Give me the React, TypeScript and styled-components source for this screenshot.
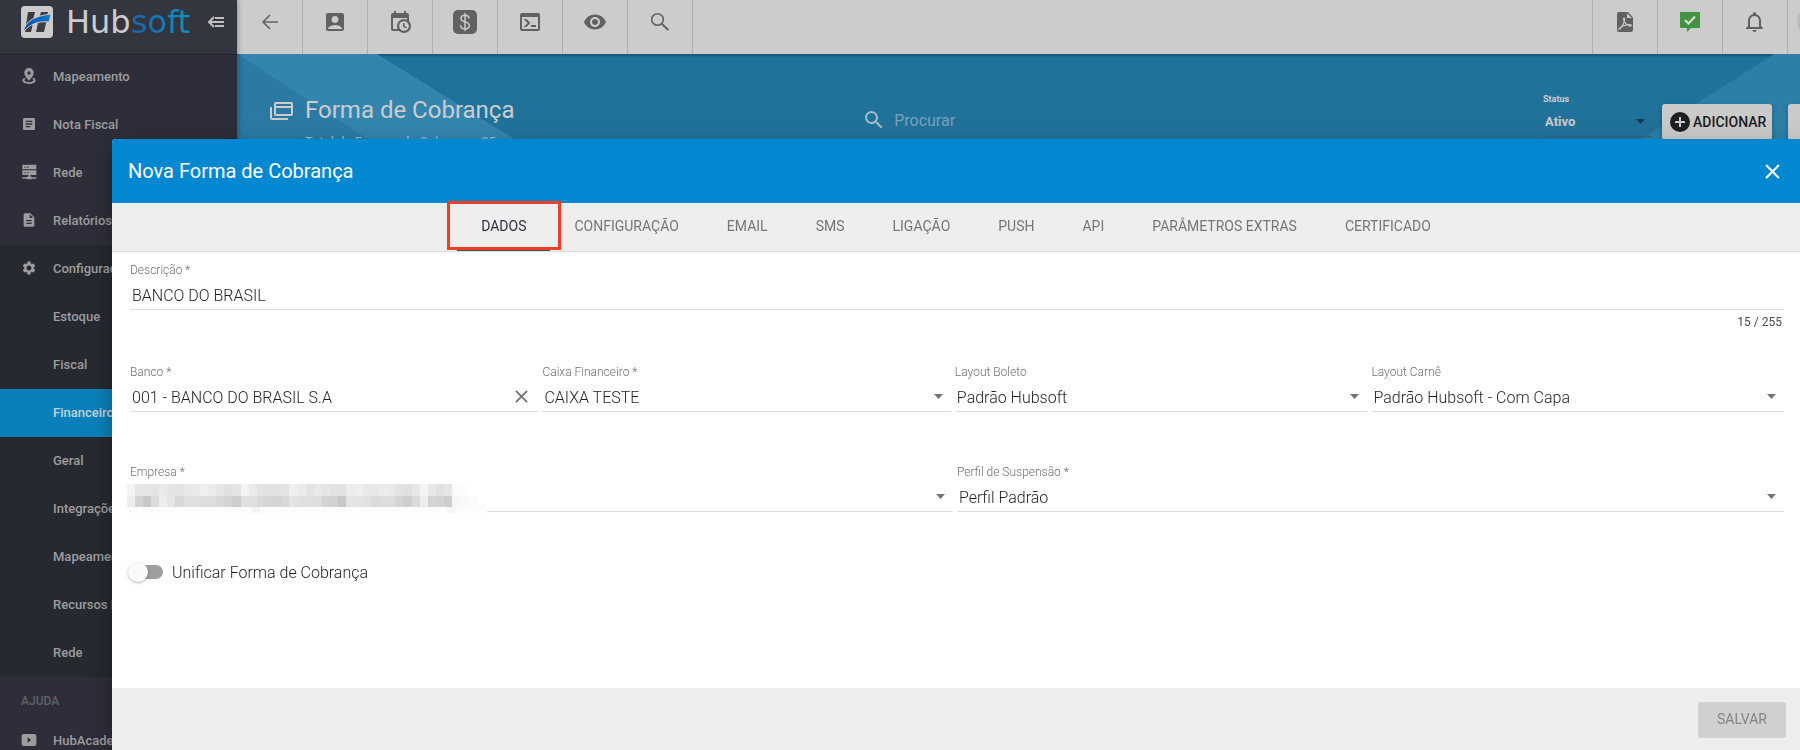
import React, { useState } from "react";
import styled, { createGlobalStyle, css } from "styled-components";
import { MdAccountBox, MdArticle, MdDescription, MdSearch, MdSettings, MdVisibility } from "react-icons/md";

const GlobalStyle = createGlobalStyle`
  *, *::before, *::after { box-sizing: border-box; }
  html, body { margin: 0; height: 100%; overflow: hidden; }
  body { font-family: Roboto, "Liberation Sans", sans-serif; font-size: 14px; background: #c8c8c8; }
  button, input, select { font-family: inherit; border: 0; background: none; padding: 0; margin: 0; outline: none; }
  a { color: inherit; text-decoration: none; }
  #root { height: 100%; }
`;

/* ---------- shell ---------- */

const Shell = styled.div`
  display: flex;
  height: 100vh;
  overflow: hidden;
`;

const Sidebar = styled.aside`
  position: relative;
  z-index: 1;
  flex: none;
  display: flex;
  flex-direction: column;
  width: 237px;
  background: #2d2e39;
  color: #9d9d9f;
  box-shadow: 0 0 6px rgba(0, 0, 0, 0.4);
`;

const Brand = styled.header`
  flex: none;
  display: flex;
  align-items: center;
  height: 55px;
  padding: 0 13px 11px 21px;
  background: #33353f;
  border-bottom: 1px solid #23252e;
`;

const BrandLink = styled.a`
  display: flex;
  align-items: center;
  flex: 1;
  gap: 12px;
`;

const Wordmark = styled.span`
  font-family: "DejaVu Sans", sans-serif;
  font-size: 32px;
  line-height: 32px;
  color: #cccccc;
`;

const WordmarkTail = styled.span`
  background: linear-gradient(90deg, #1b63ab, #0a94c8);
  background-clip: text;
  color: transparent;
`;

const CollapseButton = styled.button`
  display: flex;
  color: #c0c0c2;
`;

const Nav = styled.nav`
  display: flex;
  flex-direction: column;
  margin-top: -2px;
`;

const NavGroup = styled.div`
  background: #262930;
`;

const NavItem = styled.a<{ $active?: boolean }>`
  display: flex;
  align-items: center;
  gap: 16px;
  height: 48px;
  padding: 0 0 2px 21px;
  font-size: 13px;
  font-weight: 500;
  white-space: nowrap;
  color: ${(p) => (p.$active ? "#c4d2da" : "#9d9d9f")};
  background: ${(p) => (p.$active ? "#0a80bb" : "transparent")};
`;

const NavIcon = styled.span`
  display: flex;
  width: 16px;
  height: 16px;
`;

const NavHeading = styled.h2`
  margin: 0;
  padding: 16px 0 8px 21px;
  font-size: 12px;
  line-height: 16px;
  font-weight: 500;
  color: #5f6068;
`;

const Main = styled.main`
  flex: 1;
  min-width: 0;
  display: flex;
  flex-direction: column;
`;

const Toolbar = styled.header`
  flex: none;
  display: flex;
  justify-content: space-between;
  height: 54px;
  padding-left: 1px;
  background: #cccccc;
  overflow: hidden;
`;

const ToolGroup = styled.div`
  display: flex;
`;

const ToolButton = styled.button<{ $edge?: "left" }>`
  flex: none;
  display: flex;
  align-items: center;
  justify-content: center;
  width: 65px;
  height: 54px;
  padding-bottom: 10px;
  color: #616161;
  ${(p) =>
    p.$edge === "left"
      ? css`
          border-left: 1px solid #b1b1b1;
        `
      : css`
          border-right: 1px solid #b1b1b1;
        `}
`;

const UserSlot = styled.div`
  flex: none;
  display: flex;
  width: 13px;
  height: 54px;
  padding: 6px 0 0 9px;
  border-left: 1px solid #b1b1b1;
  overflow: hidden;
`;

const Avatar = styled.div`
  flex: none;
  width: 32px;
  height: 32px;
  border-radius: 50%;
  background: #b9b9b9;
`;

const PageHead = styled.section`
  position: relative;
  flex: none;
  display: flex;
  height: 130px;
  background: #21729b;
  box-shadow: inset 0 2px 2px rgba(0, 0, 0, 0.25);
  overflow: hidden;
`;

const Streaks = styled.svg<{ $side: "left" | "right" }>`
  position: absolute;
  top: 0;
  ${(p) => p.$side}: 0;
`;

const TitleBlock = styled.div`
  position: relative;
  flex: 0 0 40%;
  display: flex;
  gap: 12px;
  padding: 42px 0 0 33px;
`;

const TitleIcon = styled.span`
  display: flex;
  padding-top: 5px;
`;

const PageTitle = styled.h1`
  margin: 0;
  font-size: 24px;
  line-height: 28px;
  font-weight: 400;
  color: #cccccc;
`;

const Subtitle = styled.p`
  margin: 10px 0 0;
  font-size: 13px;
  line-height: 16px;
  color: #9dbccc;
`;

const SearchBox = styled.label`
  position: relative;
  display: flex;
  align-items: center;
  gap: 8px;
  height: 24px;
  margin-top: 54px;
  color: #a3bcc9;
`;

const SearchInput = styled.input`
  width: 240px;
  font-size: 16px;
  color: #cccccc;
  &::placeholder { color: #79a2b9; opacity: 1; }
`;

const HeadActions = styled.div`
  position: relative;
  display: flex;
  align-items: flex-start;
  width: 257px;
  margin-left: auto;
  padding-top: 38px;
`;

const StatusField = styled.div`
  flex: none;
  width: 109px;
  color: #cccccc;
  border-bottom: 1px solid #2b6583;
`;

const StatusLabel = styled.label`
  display: block;
  font-size: 9px;
  line-height: 14px;
  font-weight: 700;
`;

const StatusControl = styled.div`
  display: flex;
  align-items: center;
  height: 30px;
  padding: 0 7px 0 2px;
  color: #123d54;
`;

const StatusSelect = styled.select`
  flex: 1;
  appearance: none;
  font-size: 13px;
  font-weight: 700;
  color: #cccccc;
`;

const AddButton = styled.button`
  flex: none;
  display: flex;
  align-items: center;
  gap: 3px;
  height: 36px;
  margin: 12px 0 0 10px;
  padding: 0 6px 0 8px;
  border-radius: 3px;
  background: #cacaca;
  color: #1c1c1c;
  font-size: 14px;
  font-weight: 500;
  box-shadow: 0 2px 5px rgba(0, 0, 0, 0.26);
`;

const MoreButton = styled(AddButton)`
  width: 88px;
  margin-left: 16px;
`;

/* ---------- dialog ---------- */

const Dialog = styled.section`
  position: fixed;
  z-index: 2;
  inset: 139px 0 0 112px;
  display: flex;
  flex-direction: column;
  background: #ffffff;
  border-radius: 4px 0 0 0;
  box-shadow: 0 7px 8px -4px rgba(0, 0, 0, 0.2), 0 13px 19px 2px rgba(0, 0, 0, 0.14),
    0 5px 24px 4px rgba(0, 0, 0, 0.12);
`;

const DialogHead = styled.header`
  flex: none;
  display: flex;
  align-items: center;
  justify-content: space-between;
  height: 64px;
  padding: 0 18px 0 16px;
  border-radius: 4px 0 0 0;
  background: #0288d1;
  color: #ffffff;
`;

const DialogTitle = styled.h2`
  margin: 0;
  font-size: 20px;
  line-height: 24px;
  font-weight: 400;
`;

const IconButton = styled.button`
  display: flex;
  padding: 0 2px;
  color: inherit;
`;

const Tabs = styled.div`
  flex: none;
  display: flex;
  justify-content: center;
  height: 49px;
  background: #eeeeee;
  border-bottom: 1px solid #dcdcdc;
`;

const Tab = styled.button<{ $active?: boolean }>`
  position: relative;
  padding: 0 24px 2px;
  font-size: 14px;
  font-weight: 400;
  color: ${(p) => (p.$active ? "#2d323e" : "#757575")};
  ${(p) =>
    p.$active &&
    css`
      border-bottom: 2px solid #4b4f5b;
      padding-bottom: 0;
    `}
`;

const TabFrame = styled.span`
  position: absolute;
  inset: -2px -11px -1px -10px;
  border: 3px solid #ef3e23;
`;

const Form = styled.form`
  flex: 1;
  display: flex;
  flex-direction: column;
  padding: 10px 16px 0 18px;
`;

const FieldRow = styled.div<{ $columns: string }>`
  display: grid;
  grid-template-columns: ${(p) => p.$columns};
  gap: 4px;
  margin-bottom: 52px;
`;

const FieldBox = styled.div`
  position: relative;
  display: flex;
  flex-direction: column;
  gap: 2px;
  min-width: 0;
`;

const FieldLabel = styled.label`
  font-size: 12px;
  line-height: 16px;
  font-weight: 300;
  color: #6f6f6f;
`;

const Control = styled.div`
  display: flex;
  align-items: center;
  height: 30px;
  padding: 0 8px 0 2px;
  border-bottom: 1px solid #dedede;
  color: #757575;
`;

const valueText = css`
  flex: 1;
  min-width: 0;
  height: 28px;
  padding-top: 2px;
  font-size: 16px;
  font-weight: 300;
  color: #1f1f1f;
`;

const TextInput = styled.input`
  ${valueText}
`;

const SelectInput = styled.select`
  ${valueText}
  appearance: none;
`;

const Counter = styled.output`
  align-self: flex-end;
  margin: 4px 2px 34px 0;
  font-size: 12px;
  line-height: 16px;
  color: #4a4a4a;
`;

const Redaction = styled.svg`
  position: absolute;
  left: -3px;
  top: 20px;
`;

const SwitchRow = styled.label`
  align-self: flex-start;
  display: flex;
  align-items: center;
  gap: 9px;
  height: 20px;
  margin-top: -2px;
  font-size: 16px;
  font-weight: 300;
  color: #1f1f1f;
`;

const Switch = styled.input`
  appearance: none;
  position: relative;
  width: 33px;
  height: 14px;
  border-radius: 7px;
  background: #9e9e9e;
  &::before {
    content: "";
    position: absolute;
    top: -3px;
    left: -2px;
    width: 20px;
    height: 20px;
    border-radius: 50%;
    background: #fafafa;
    box-shadow: 0 1px 3px rgba(0, 0, 0, 0.3);
  }
  &:checked { background: #81c3e8; }
  &:checked::before { left: 15px; background: #0288d1; }
`;

const DialogFoot = styled.footer`
  flex: none;
  display: flex;
  justify-content: flex-end;
  align-items: center;
  height: 62px;
  padding: 2px 14px 0;
  background: #eeeeee;
`;

const SaveButton = styled.button`
  min-width: 88px;
  height: 36px;
  padding-bottom: 2px;
  border-radius: 3px;
  background: #d0d0d0;
  color: #858585;
  font-size: 14px;
  font-weight: 400;
`;

/* ---------- drawings ---------- */

const Glyph = ({ d, size = 24 }: { d: string; size?: number }) => (
  <svg width={size} height={size} viewBox="0 0 24 24" fill="currentColor" aria-hidden="true">
    <path d={d} fillRule="evenodd" />
  </svg>
);

const CALENDAR =
  "M15,13H16.5V15.82L18.94,17.23L18.19,18.53L15,16.69V13M19,8H5V19H9.67C9.24,18.09 9,17.07 9,16A7,7 0 0,1 16,9C17.07,9 18.09,9.24 19,9.67V8M5,21C3.89,21 3,20.1 3,19V5C3,3.89 3.89,3 5,3H6V1H8V3H16V1H18V3H19A2,2 0 0,1 21,5V11.1C22.24,12.36 23,14.09 23,16A7,7 0 0,1 16,23C14.09,23 12.36,22.24 11.1,21H5M16,11.15A4.85,4.85 0 0,0 11.15,16C11.15,18.68 13.32,20.85 16,20.85A4.85,4.85 0 0,0 20.85,16C20.85,13.32 18.68,11.15 16,11.15Z";
const CONSOLE =
  "M20,19V7H4V19H20M20,3A2,2 0 0,1 22,5V19A2,2 0 0,1 20,21H4A2,2 0 0,1 2,19V5C2,3.89 2.9,3 4,3H20M13,17V15H18V17H13M9.58,13L5.57,9H8.4L11.7,12.3C12.09,12.69 12.09,13.33 11.7,13.72L8.42,17H5.59L9.58,13Z";
const BELL =
  "M16,17H7V10.5C7,8 9,6 11.5,6C14,6 16,8 16,10.5M18,16V10.5C18,7.43 15.86,4.86 13,4.18V3.5A1.5,1.5 0 0,0 11.5,2A1.5,1.5 0 0,0 10,3.5V4.18C7.13,4.86 5,7.43 5,10.5V16L3,18V19H20V18M11.5,22A2,2 0 0,0 13.5,20H9.5A2,2 0 0,0 11.5,22Z";
const SERVER =
  "M2,1H23V8H2ZM2,9.500H23V16.500H2ZM5,4V5.500H7V4ZM9,4V5.500H11V4ZM5,12.500V14H7V12.500ZM9,12.500V14H11V12.500ZM11,16.500H14V19H16V20H23V22H16V23H9V22H2V20H9V19H11Z";
const PIN =
  "M12,0A7,7 0 0,1 19,7.500C19,12 12,19 12,19C12,19 5,12 5,7.500A7,7 0 0,1 12,0M12,5A2.5,2.5 0 0,0 12,10A2.5,2.5 0 0,0 12,5M22,18.5C22,22 17.5,24 12,24C6.5,24 2,22 2,18.5C2,17 3.3,15.5 5.5,14.5L7,16.500C5.500,17 5.200,17.6 5.200,18.3C5.200,20 8,21 12,21C16,21 18.800,20 18.800,18.3C18.800,17.6 18.500,17 17,16.500L18.5,14.5C20.7,15.5 22,17 22,18.5Z";
const VIDEO = "M4,3H20A3,3 0 0,1 23,6V18A3,3 0 0,1 20,21H4A3,3 0 0,1 1,18V6A3,3 0 0,1 4,3M10,8V16L15.5,12Z";

const HubLogo = () => (
  <svg width="33" height="32" viewBox="0 0 33 32" aria-hidden="true">
    <defs>
      <linearGradient id="swoosh" x1="0" x2="1" y1="1" y2="0">
        <stop offset="0" stopColor="#0a3fb4" />
        <stop offset="1" stopColor="#1480c4" />
      </linearGradient>
    </defs>
    <rect width="32" height="32" rx="4" fill="#cbcbcb" />
    <path d="M7 6h7l-2 8-7 5zM20 6h7l-1 4-8 2zM6 20l6-3-2 9H4zM17 17l9-4-3 13h-8z" fill="#3c3c3e" />
    <path d="M2 26C5 14 14 10 30 8l-2 8C17 15 9 18 2 26z" fill="url(#swoosh)" stroke="#cbcbcb" strokeWidth="1" />
  </svg>
);

const CollapseIcon = () => (
  <svg width="16" height="12" viewBox="0 0 16 12" fill="none" stroke="currentColor" strokeWidth="2" aria-hidden="true">
    <path d="M6 1L1 6l5 5M2 6h14M7 2h9M7 10h9" />
  </svg>
);

const BackIcon = () => (
  <svg width="24" height="24" viewBox="0 0 24 24" fill="none" stroke="currentColor" strokeWidth="1.6" aria-hidden="true">
    <path d="M20 12H5M12 5l-7 7 7 7" />
  </svg>
);

const MoneyIcon = () => (
  <svg width="24" height="24" viewBox="0 0 24 24" aria-hidden="true">
    <rect width="24" height="24" rx="5" fill="#616161" />
    <path
      d="M16 8.5C16 6.3 14.3 5.2 12 5.2S8 6.4 8 8.4c0 4.6 8.3 2.4 8.3 7 0 2.200-1.900 3.400-4.300 3.400s-4.400-1.300-4.400-3.600M12 3v18"
      fill="none"
      stroke="#cccccc"
      strokeWidth="1.500"
    />
  </svg>
);

const LensIcon = () => (
  <svg width="24" height="24" viewBox="0 0 24 24" fill="none" stroke="currentColor" strokeWidth="1.600" aria-hidden="true">
    <circle cx="9.500" cy="9.500" r="5.800" />
    <path d="M14 14l6.300 6" strokeWidth="2" />
  </svg>
);

const PdfIcon = () => (
  <svg width="24" height="24" viewBox="0 0 24 24" aria-hidden="true">
    <path d="M6 2h9l5 5.500V20a2 2 0 0 1-2 2H6a2 2 0 0 1-2-2V4a2 2 0 0 1 2-2z" fill="currentColor" />
    <path d="M14 3.500V8h5z" fill="#cccccc" />
    <path
      d="M5.800 19.400c2-.4 5.400-6 5.900-10.200.1-1.400-1.300-1.400-1.100 0 .3 3 3.400 6.300 6.400 6.900 1.700.2 1.700-1.500-.3-1.500-3.800 0-10 2-10.900 4.800z"
      fill="none"
      stroke="#cccccc"
      strokeWidth="1.200"
    />
  </svg>
);

const ChatCheckIcon = () => (
  <svg width="24" height="24" viewBox="0 0 24 24" aria-hidden="true">
    <path d="M3 2h18a1 1 0 0 1 1 1v14a1 1 0 0 1-1 1h-8l-4 4v-4H3a1 1 0 0 1-1-1V3a1 1 0 0 1 1-1z" fill="#41933f" />
    <path d="M7 10l3.500 3.500L17 6.500" fill="none" stroke="#dddddd" strokeWidth="2" />
  </svg>
);

const CardsIcon = () => (
  <svg width="23" height="19" viewBox="0 0 23 19" fill="none" stroke="#cccccc" strokeWidth="2" aria-hidden="true">
    <rect x="5" y="2" width="17" height="12" rx="1" />
    <path d="M5 6h17" strokeWidth="2" />
    <path d="M1 6v11q0 1 1 1h16" />
  </svg>
);

const PlusIcon = () => (
  <svg width="20" height="20" viewBox="0 0 20 20" aria-hidden="true">
    <circle cx="10" cy="10" r="10" fill="#1c1f20" />
    <path d="M10 5v10M5 10h10" stroke="#cacaca" strokeWidth="2" />
  </svg>
);

const Arrow = () => (
  <svg width="9" height="5" viewBox="0 0 9 5" aria-hidden="true">
    <path d="M0 0h9L4.500 5z" fill="currentColor" />
  </svg>
);

const Cross = ({ size, weight }: { size: number; weight: number }) => (
  <svg width={size} height={size} viewBox="0 0 14 14" stroke="currentColor" strokeWidth={weight} aria-hidden="true">
    <path d="M1 1l12 12M13 1L1 13" />
  </svg>
);

const MOSAIC_TOP =
  "f4 e6 e5 e4 ea e5 e3 e8 ea ef eb e6 e0 e4 f4 eb e3 e2 e2 e4 f0 eb e3 e9 e5 e2 e1 ec ef e8 e9 ec ea e3 e0 e7 f4 e8 e1 e6 fb".split(" ");
const MOSAIC_LOW =
  "ec d2 c8 dc ed e6 d8 df df dd dd d8 d4 cd e0 e0 d9 d6 d4 d8 e3 e0 e0 de d4 d2 c8 e4 e4 e1 db dd dd d4 ce db ee d4 d2 cd f6 f9 fb".split(" ");

const Mosaic = () => (
  <Redaction width="360" height="29" aria-hidden="true">
    <rect x="4" width="356" height="29" fill="#fcfcfc" />
    <rect x="340" width="20" height="20" fill="#ffffff" />
    {MOSAIC_TOP.map((c, i) => (
      <rect key={i} x={i * 8 + Math.floor(i / 7)} y="0" width="9" height="12" fill={`#${c}${c}${c}`} />
    ))}
    {MOSAIC_LOW.map((c, i) => (
      <rect key={i} x={i * 8 + Math.floor(i / 7)} y="12" width="9" height="11" fill={`#${c}${c}${c}`} />
    ))}
    <rect x="125" y="23" width="8" height="6" fill="#f3f3f3" />
    <rect x="320" y="23" width="8" height="6" fill="#f5f5f5" />
  </Redaction>
);

/* ---------- composed parts ---------- */

interface SelectFieldProps {
  id: string;
  label: string;
  value: string;
  children?: React.ReactNode;
}

const SelectField = ({ id, label, value, children }: SelectFieldProps) => (
  <FieldBox>
    <FieldLabel htmlFor={id}>{label}</FieldLabel>
    <Control>
      <SelectInput id={id}>
        <option>{value}</option>
      </SelectInput>
      <Arrow />
    </Control>
    {children}
  </FieldBox>
);

const TAB_NAMES = [
  "DADOS",
  "CONFIGURAÇÃO",
  "EMAIL",
  "SMS",
  "LIGAÇÃO",
  "PUSH",
  "API",
  "PARÂMETROS EXTRAS",
  "CERTIFICADO",
];

const TOP_NAV = [
  { label: "Mapeamento", icon: <Glyph d={PIN} size={16} /> },
  { label: "Nota Fiscal", icon: <MdArticle size={16} /> },
  { label: "Rede", icon: <Glyph d={SERVER} size={16} /> },
  { label: "Relatórios", icon: <MdDescription size={16} /> },
];

const SUB_NAV = ["Estoque", "Fiscal", "Financeiro", "Geral", "Integrações", "Mapeamento", "Recursos Humanos", "Rede"];

export default function App() {
  const [tab, setTab] = useState("DADOS");
  const [description, setDescription] = useState("BANCO DO BRASIL");
  const [bank, setBank] = useState("001 - BANCO DO BRASIL S.A");

  return (
    <>
      <GlobalStyle />
      <Shell>
        <Sidebar>
          <Brand>
            <BrandLink href="#">
              <HubLogo />
              <Wordmark>
                Hub<WordmarkTail>soft</WordmarkTail>
              </Wordmark>
            </BrandLink>
            <CollapseButton aria-label="Recolher menu">
              <CollapseIcon />
            </CollapseButton>
          </Brand>
          <Nav>
            {TOP_NAV.map((n) => (
              <NavItem key={n.label} href="#">
                <NavIcon>{n.icon}</NavIcon>
                {n.label}
              </NavItem>
            ))}
            <NavGroup>
              <NavItem href="#">
                <NavIcon>
                  <MdSettings size={16} />
                </NavIcon>
                Configuração
              </NavItem>
              {SUB_NAV.map((label) => (
                <NavItem key={label} href="#" $active={label === "Financeiro"}>
                  <NavIcon />
                  {label}
                </NavItem>
              ))}
            </NavGroup>
            <NavHeading>AJUDA</NavHeading>
            <NavItem href="#">
              <NavIcon>
                <Glyph d={VIDEO} size={16} />
              </NavIcon>
              HubAcademy
            </NavItem>
          </Nav>
        </Sidebar>

        <Main>
          <Toolbar>
            <ToolGroup>
              <ToolButton aria-label="Voltar"><BackIcon /></ToolButton>
              <ToolButton aria-label="Clientes"><MdAccountBox size={24} /></ToolButton>
              <ToolButton aria-label="Agenda"><Glyph d={CALENDAR} /></ToolButton>
              <ToolButton aria-label="Financeiro"><MoneyIcon /></ToolButton>
              <ToolButton aria-label="Console"><Glyph d={CONSOLE} /></ToolButton>
              <ToolButton aria-label="Visualizar"><MdVisibility size={24} /></ToolButton>
              <ToolButton aria-label="Pesquisar"><LensIcon /></ToolButton>
            </ToolGroup>
            <ToolGroup>
              <ToolButton $edge="left" aria-label="PDF"><PdfIcon /></ToolButton>
              <ToolButton $edge="left" aria-label="Mensagens"><ChatCheckIcon /></ToolButton>
              <ToolButton $edge="left" aria-label="Notificações"><Glyph d={BELL} /></ToolButton>
              <UserSlot>
                <Avatar />
              </UserSlot>
            </ToolGroup>
          </Toolbar>

          <PageHead>
            <Streaks $side="left" width="330" height="130" aria-hidden="true">
              <path d="M0 0L208 130H0z" fill="#2a7aa3" />
              <path d="M0 0H140L350 130H200z" fill="#3385ae" />
            </Streaks>
            <Streaks $side="right" width="210" height="130" aria-hidden="true">
              <path d="M210 0H184L0 118v12H210z" fill="#2d7fa8" />
            </Streaks>
            <TitleBlock>
              <TitleIcon>
                <CardsIcon />
              </TitleIcon>
              <div>
                <PageTitle>Forma de Cobrança</PageTitle>
                <Subtitle>Total de Formas de Cobrança: 25</Subtitle>
              </div>
            </TitleBlock>
            <SearchBox>
              <MdSearch size={24} />
              <SearchInput type="search" placeholder="Procurar" aria-label="Procurar" />
            </SearchBox>
            <HeadActions>
              <StatusField>
                <StatusLabel htmlFor="status">Status</StatusLabel>
                <StatusControl>
                  <StatusSelect id="status">
                    <option>Ativo</option>
                  </StatusSelect>
                  <Arrow />
                </StatusControl>
              </StatusField>
              <AddButton>
                <PlusIcon />
                ADICIONAR
              </AddButton>
              <MoreButton aria-label="Mais opções" />
            </HeadActions>
          </PageHead>
        </Main>
      </Shell>

      <Dialog role="dialog" aria-labelledby="dialog-title">
        <DialogHead>
          <DialogTitle id="dialog-title">Nova Forma de Cobrança</DialogTitle>
          <IconButton aria-label="Fechar">
            <Cross size={15} weight={2} />
          </IconButton>
        </DialogHead>
        <Tabs role="tablist">
          {TAB_NAMES.map((name) => (
            <Tab key={name} role="tab" aria-selected={tab === name} $active={tab === name} onClick={() => setTab(name)}>
              {name}
              {name === "DADOS" && <TabFrame />}
            </Tab>
          ))}
        </Tabs>
        <Form onSubmit={(e) => e.preventDefault()}>
          <FieldBox>
            <FieldLabel htmlFor="descricao">Descrição *</FieldLabel>
            <Control>
              <TextInput id="descricao" value={description} maxLength={255} onChange={(e) => setDescription(e.target.value)} />
            </Control>
          </FieldBox>
          <Counter htmlFor="descricao">{description.length} / 255</Counter>

          <FieldRow $columns="99fr 99fr 100fr 100fr">
            <FieldBox>
              <FieldLabel htmlFor="banco">Banco *</FieldLabel>
              <Control>
                <TextInput id="banco" value={bank} onChange={(e) => setBank(e.target.value)} />
                <IconButton type="button" aria-label="Limpar banco" onClick={() => setBank("")}>
                  <Cross size={13} weight={2} />
                </IconButton>
              </Control>
            </FieldBox>
            <SelectField id="caixa" label="Caixa Financeiro *" value="CAIXA TESTE" />
            <SelectField id="boleto" label="Layout Boleto" value="Padrão Hubsoft" />
            <SelectField id="carne" label="Layout Carnê" value="Padrão Hubsoft - Com Capa" />
          </FieldRow>

          <FieldRow $columns="199fr 200fr">
            <SelectField id="empresa" label="Empresa *" value="">
              <Mosaic />
            </SelectField>
            <SelectField id="perfil" label="Perfil de Suspensão *" value="Perfil Padrão" />
          </FieldRow>

          <SwitchRow>
            <Switch type="checkbox" role="switch" />
            Unificar Forma de Cobrança
          </SwitchRow>
        </Form>
        <DialogFoot>
          <SaveButton disabled>SALVAR</SaveButton>
        </DialogFoot>
      </Dialog>
    </>
  );
}
